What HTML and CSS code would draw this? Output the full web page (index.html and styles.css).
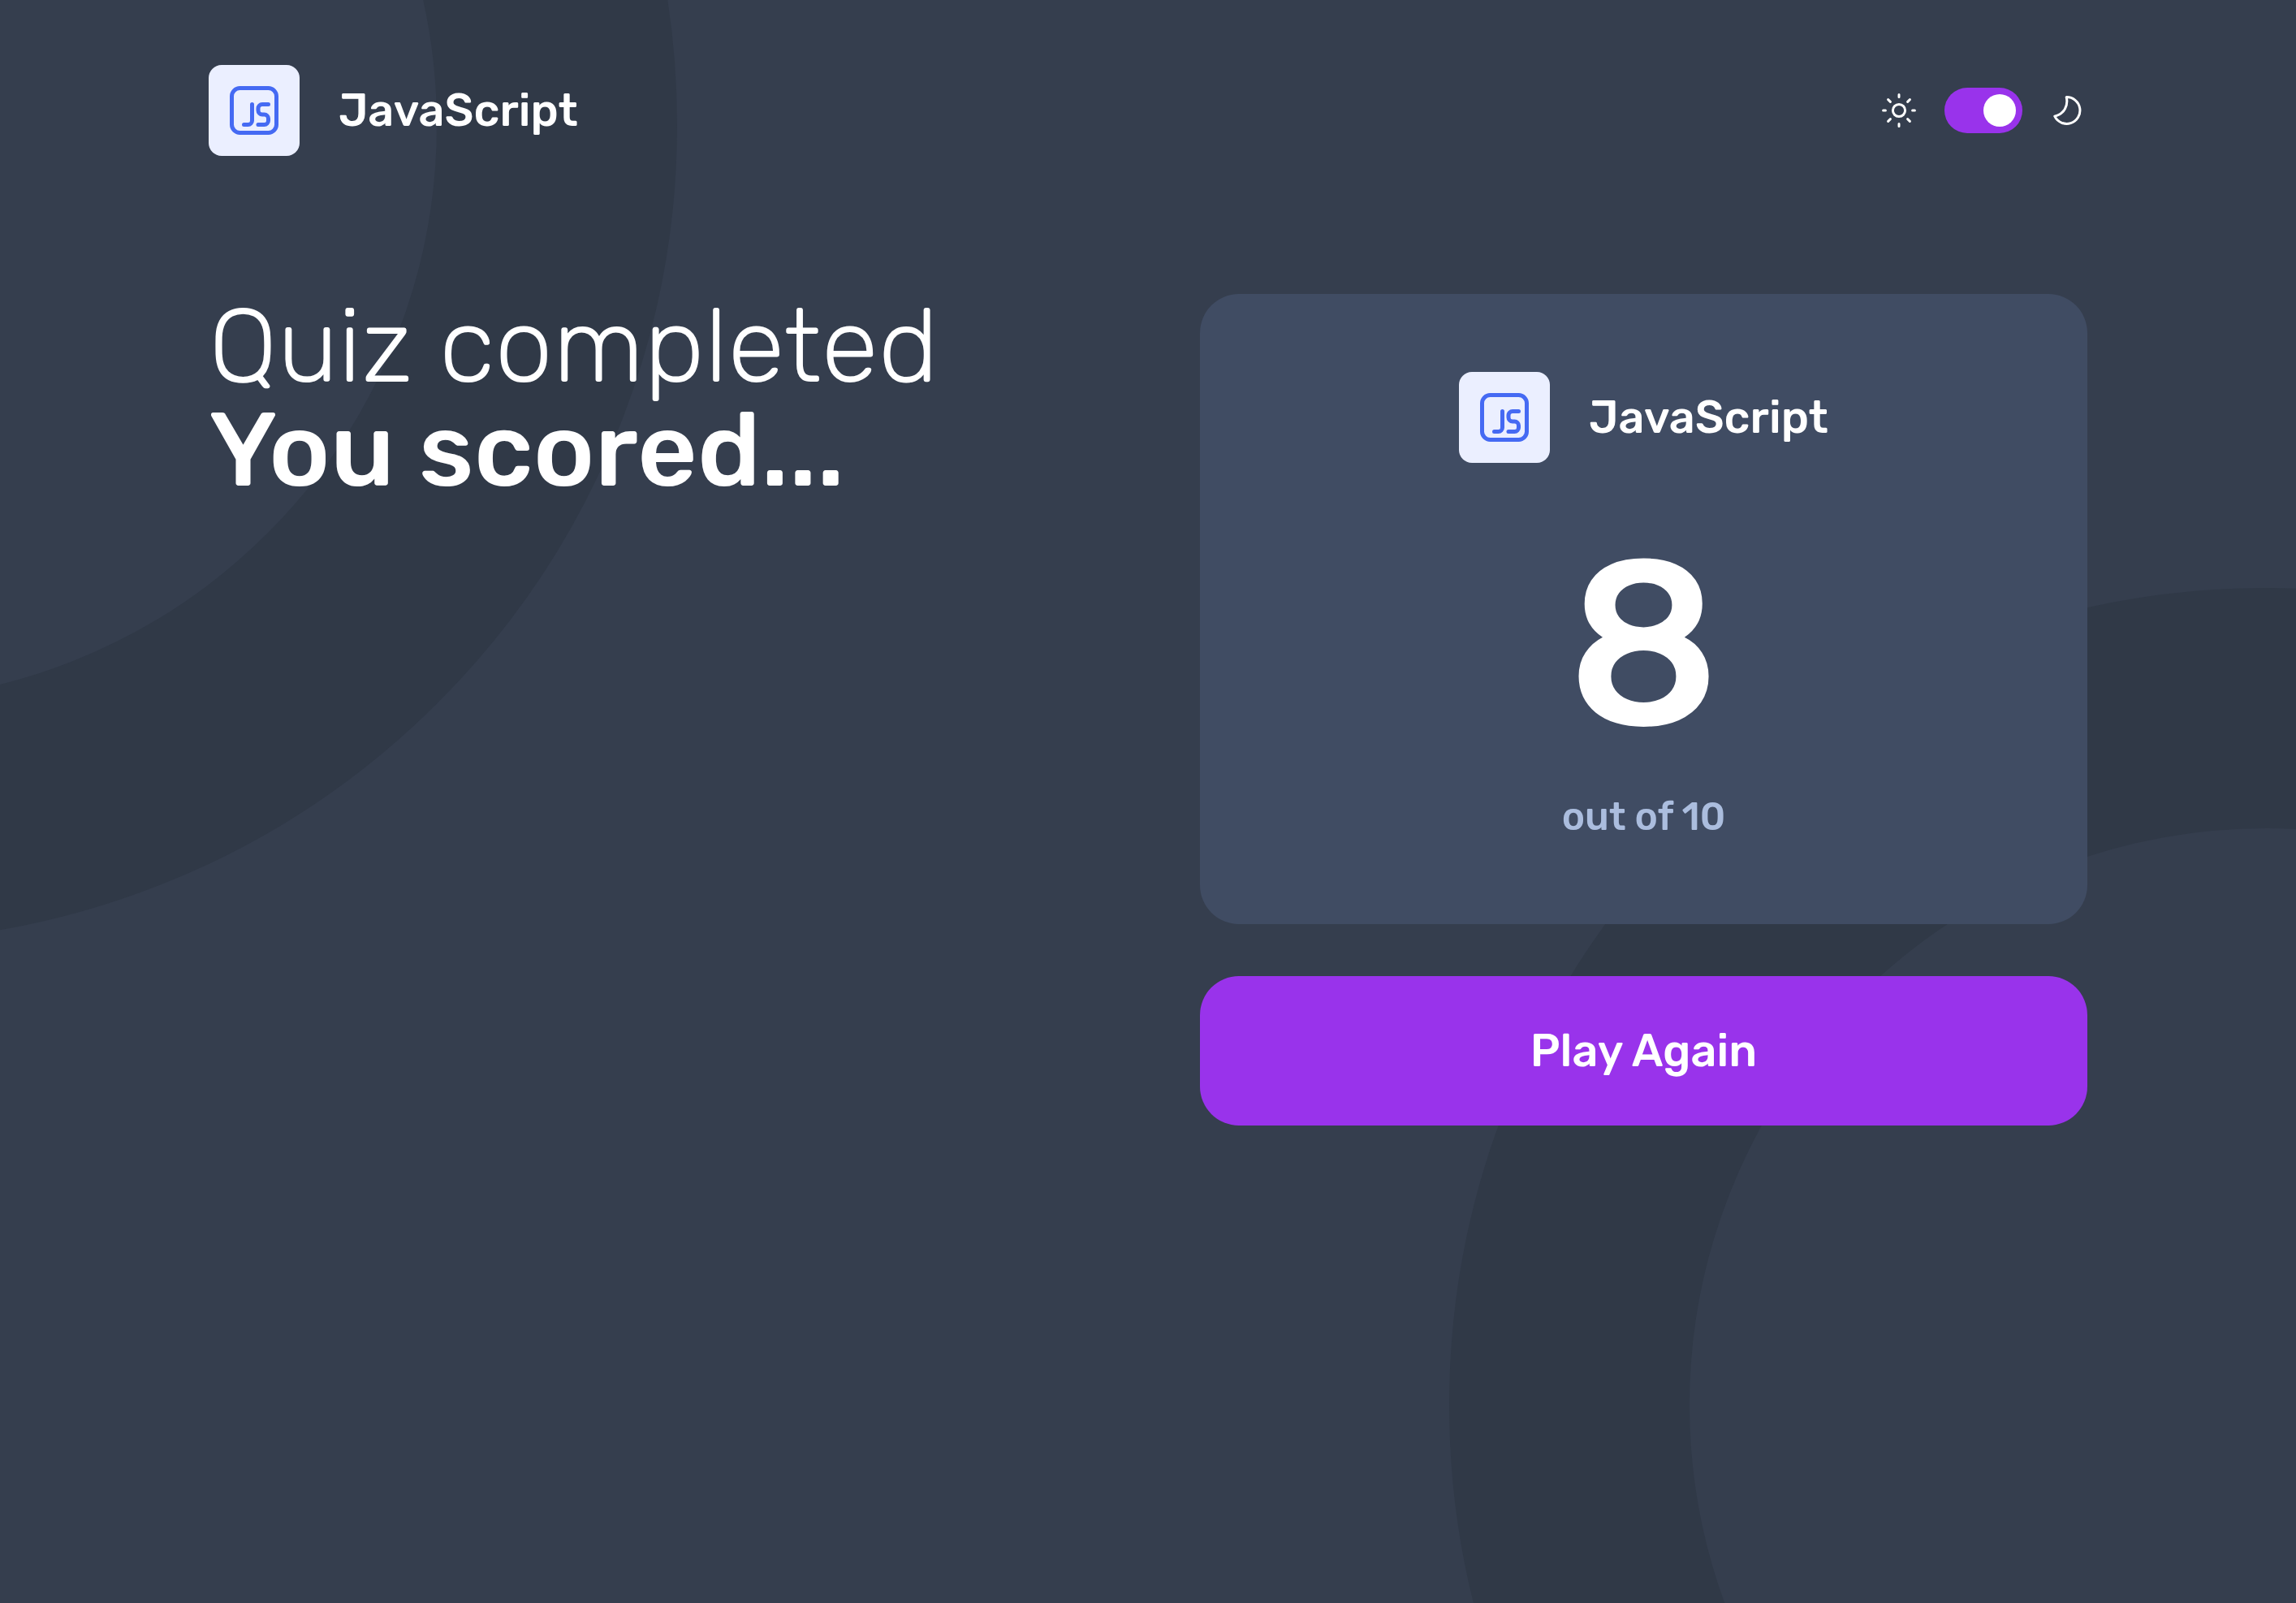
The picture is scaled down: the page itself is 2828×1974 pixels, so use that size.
FILE: index.html
```html
<!DOCTYPE html>
<html lang="en">
<head>
  <meta charset="utf-8">
  <meta name="viewport" content="width=device-width, initial-scale=1">
  <title>Quiz completed</title>
  <link rel="stylesheet" href="styles.css">
</head>
<body>
  <svg width="0" height="0" class="sprite" aria-hidden="true">
    <symbol id="icon-js" viewBox="0 0 60 60">
      <g fill="none" stroke="currentColor" stroke-width="5" stroke-linecap="round" stroke-linejoin="round">
        <rect x="2.5" y="2.5" width="55" height="55" rx="10"/>
        <path d="M27.5 22.5V42.5a5 5 0 0 1-5 5H17.5"/>
        <path d="M47.5 22.5H40a5 5 0 0 0-5 5V30a5 5 0 0 0 5 5h2.5a5 5 0 0 1 5 5v2.5a5 5 0 0 1-5 5H35"/>
      </g>
    </symbol>
  </svg>

  <div class="backdrop" aria-hidden="true"></div>

  <div class="container">
    <header class="header">
      <div class="subject">
        <span class="subject-icon"><svg class="subject-glyph" aria-hidden="true"><use href="#icon-js"/></svg></span>
        <span class="subject-name">JavaScript</span>
      </div>
      <div class="theme">
        <svg class="theme-icon" viewBox="0 0 24 24" aria-hidden="true">
          <circle cx="12" cy="12" r="3.8"/>
          <path d="M12 2.3v1.4M12 20.3v1.4M2.3 12h1.4M20.3 12h1.4M5.3 5.3l1.4 1.4M17.3 17.3l1.4 1.4M5.3 18.7l1.4-1.4M17.3 6.7l1.4-1.4"/>
        </svg>
        <input class="switch" type="checkbox" role="switch" aria-label="Dark mode" checked>
        <svg class="theme-icon" viewBox="0 0 24 24" aria-hidden="true">
          <path d="M11.1 3.8A8.2 8.2 0 1 1 3.9 15.6C10 14.2 12.3 8.6 11.1 3.8Z"/>
        </svg>
      </div>
    </header>

    <main class="result">
      <h1 class="heading">
        <span class="heading-light">Quiz completed</span>
        <span class="heading-strong">You scored...</span>
      </h1>
      <div class="panel">
        <section class="card" aria-label="Score">
          <div class="subject">
            <span class="subject-icon"><svg class="subject-glyph" aria-hidden="true"><use href="#icon-js"/></svg></span>
            <span class="subject-name">JavaScript</span>
          </div>
          <p class="score">8</p>
          <p class="total">out of 10</p>
        </section>
        <button class="play" type="button">Play Again</button>
      </div>
    </main>
  </div>
</body>
</html>
```
FILE: styles.css
```css
:root {
  --bg: #353e4e;
  --ring: #303947;
  --card: #404c63;
  --accent: #9933eb;
  --tile: #ebefff;
  --js: #456af3;
  --muted: #abbdde;
  --white: #fff;
}

*,
*::before,
*::after {
  box-sizing: border-box;
  margin: 0;
}

body {
  min-height: 100vh;
  background: var(--bg);
  color: var(--white);
  font-family: Rubik, Inter, "Noto Sans", sans-serif;
  font-weight: 500;
}

.sprite {
  position: absolute;
}

/* Two oversized rings bleeding off opposite corners */
.backdrop {
  position: fixed;
  inset: 0;
  z-index: -1;
  overflow: hidden;
}

.backdrop::before,
.backdrop::after {
  content: "";
  position: absolute;
  width: 2012px;
  height: 2012px;
  border: 296px solid var(--ring);
  border-radius: 50%;
}

.backdrop::before {
  top: -852px;
  left: -1178px;
}

.backdrop::after {
  right: -969px;
  bottom: -762px;
}

.container {
  width: 100%;
  max-width: 2410px;
  margin: 0 auto;
  padding: 80px 48px;
}

.header {
  display: flex;
  align-items: center;
  justify-content: space-between;
  margin-bottom: 170px;
}

.subject {
  display: flex;
  align-items: center;
  gap: 48px;
}

.subject-icon {
  display: grid;
  place-items: center;
  width: 112px;
  height: 112px;
  border-radius: 16px;
  background: var(--tile);
  color: var(--js);
}

.subject-glyph {
  width: 60px;
  height: 60px;
}

.subject-name {
  font-size: 56px;
  line-height: 56px;
}

.theme {
  display: flex;
  align-items: center;
  gap: 32px;
}

.theme-icon {
  width: 48px;
  height: 48px;
  fill: none;
  stroke: currentColor;
  stroke-width: 1.5;
  stroke-linecap: round;
  stroke-linejoin: round;
}

.switch {
  appearance: none;
  display: flex;
  width: 96px;
  height: 56px;
  padding: 8px;
  border-radius: 28px;
  background: var(--accent);
  cursor: pointer;
}

.switch::before {
  content: "";
  width: 40px;
  height: 40px;
  border-radius: 50%;
  background: var(--white);
}

.switch:checked::before {
  margin-left: auto;
}

.result {
  display: grid;
  grid-template-columns: 1fr 1fr;
  gap: 128px;
  align-items: start;
}

.heading {
  font-size: 128px;
  line-height: 128px;
}

.heading-light,
.heading-strong {
  display: block;
}

.heading-light {
  font-weight: 300;
}

.heading-strong {
  font-weight: 500;
}

.panel {
  display: grid;
  gap: 64px;
}

.card {
  display: flex;
  flex-direction: column;
  align-items: center;
  padding: 96px;
  border-radius: 48px;
  background: var(--card);
}

.score {
  margin: 80px 0 32px;
  font-size: 288px;
  line-height: 288px;
}

.total {
  color: var(--muted);
  font-size: 48px;
  line-height: 72px;
}

.play {
  padding: 64px;
  border: 0;
  border-radius: 48px;
  background: var(--accent);
  color: var(--white);
  font: inherit;
  font-size: 56px;
  line-height: 56px;
  cursor: pointer;
}

@media (max-width: 1600px) {
  .result {
    grid-template-columns: 1fr;
  }
}
```
